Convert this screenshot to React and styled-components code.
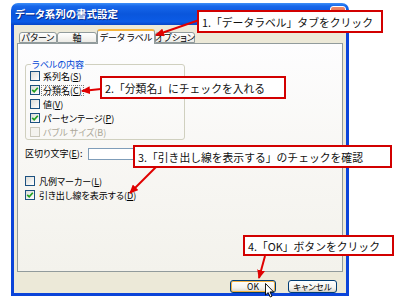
import React from "react"
import styled, { createGlobalStyle } from "styled-components"

const GlobalStyle = createGlobalStyle`
  html, body {
    margin: 0;
    padding: 0;
    background: #fff;
  }
  body {
    font-family: "Noto Sans CJK JP", "Liberation Sans", sans-serif;
    font-feature-settings: "palt";
  }
`

const Stage = styled.div`
  position: relative;
  width: 400px;
  height: 300px;
  overflow: hidden;
  background: #fff;
`

const Window = styled.div`
  margin: 3px 0 0 11px;
  width: 338px;
  height: 293px;
  display: flex;
  flex-direction: column;
`

const TitleBar = styled.div`
  height: 22px;
  flex: none;
  border-radius: 7px 7px 0 0;
  background: linear-gradient(180deg, #3d8ff8 0%, #1767ea 14%, #0a56dc 50%, #0b5be6 85%, #0846c6 100%);
  display: flex;
  align-items: center;
  justify-content: space-between;
  padding: 0 3px 0 4px;
`

const Title = styled.span`
  color: #fff;
  font-size: 10.5px;
  font-weight: bold;
  line-height: 12px;
  text-shadow: 1px 1px #0a2a8a;
`

const CloseBox = styled.span`
  width: 14px;
  height: 14px;
  border: 1px solid #fff;
  border-radius: 3px;
  background: linear-gradient(180deg, #f08a6a, #d8441e);
`

const Client = styled.div`
  flex: 1;
  display: flex;
  flex-direction: column;
  background: #ece9d8;
  border: 3px solid #0b44d9;
  border-top: none;
`

const TabStrip = styled.div`
  height: 14px;
  padding: 4px 0 0 5px;
  display: flex;
  align-items: flex-end;
  flex: none;
`

const Tab = styled.div`
  position: relative;
  z-index: 1;
  width: ${p => p.$w}px;
  height: ${p => (p.$active ? 15 : 11)}px;
  margin-bottom: ${p => (p.$active ? -1 : 0)}px;
  box-sizing: border-box;
  border: 1px solid #919b9c;
  border-bottom: ${p => (p.$active ? "none" : "1px solid #919b9c")};
  border-top: ${p => (p.$active ? "2px solid #f5b43c" : "1px solid #919b9c")};
  border-radius: 3px 3px 0 0;
  background: ${p => (p.$active ? "#fcfcfe" : "linear-gradient(180deg, #fff, #ecebe6)")};
  font-size: 9px;
  line-height: 9px;
  color: #000;
  display: flex;
  align-items: center;
  justify-content: center;
  white-space: nowrap;
`

const Panel = styled.div`
  flex: none;
  height: 229px;
  margin: 0 3px;
  box-sizing: border-box;
  border: 1px solid #919b9c;
  background: linear-gradient(180deg, #fdfdfe 0%, #f8f7f4 50%, #f3f2ec 100%);
  padding: 16px 0 0 7px;
  display: flex;
  flex-direction: column;
  align-items: flex-start;
`

const GroupBox = styled.fieldset`
  margin: 0;
  width: 160px;
  box-sizing: border-box;
  padding: 0 0 0 4px;
  border: 1px solid #d0d0bf;
  border-radius: 3px;
`

const Legend = styled.legend`
  font-size: 9px;
  line-height: 9px;
  color: #0046d5;
  padding: 0 1px;
  margin-left: 1px;
`

const CheckList = styled.div`
  display: flex;
  flex-direction: column;
`

const Row = styled.div`
  height: 14px;
  display: flex;
  align-items: center;
  margin-top: ${p => p.$mt || 0}px;
  font-size: 9px;
  color: ${p => (p.$disabled ? "#aca899" : "#000")};
  white-space: nowrap;
`

const Box = styled.span`
  width: 10px;
  height: 10px;
  box-sizing: border-box;
  border: 1px solid ${p => (p.$disabled ? "#cac8bb" : "#1c5180")};
  background: ${p => (p.$disabled ? "#f4f3ee" : "linear-gradient(135deg, #dcdcd7, #fff)")};
  margin-right: ${p => p.$gap || 1}px;
  display: flex;
  align-items: center;
  justify-content: center;
  flex: none;
`

const Label = styled.span`
  line-height: 9px;
  padding: 0 1px;
  border: 1px ${p => (p.$focus ? "dotted #777" : "solid transparent")};
`

const FieldRow = styled.div`
  height: 12px;
  margin-top: 8px;
  display: flex;
  align-items: center;
  font-size: 9px;
  white-space: nowrap;
`

const FieldLabel = styled.span`
  width: 63px;
  line-height: 10px;
`

const TextInput = styled.span`
  width: 70px;
  height: 12px;
  box-sizing: border-box;
  border: 1px solid #7f9db9;
  background: #fff;
`

const ButtonRow = styled.div`
  flex: none;
  height: 14px;
  margin-top: 7px;
  padding-right: 9px;
  display: flex;
  justify-content: flex-end;
  align-items: center;
  gap: 12px;
`

const Button = styled.div`
  width: ${p => p.$w}px;
  height: 13px;
  box-sizing: border-box;
  border: 1px solid #003c74;
  border-radius: 3px;
  background: linear-gradient(180deg, #fff 0%, #f4f3ee 60%, #d8d4c8 100%);
  box-shadow: ${p => (p.$hot ? "inset 0 0 0 1px #f3b143" : "inset 0 -1px 0 #d6d0c5")};
  font-size: 8.5px;
  line-height: 11px;
  text-align: center;
  color: #000;
`

const Callout = styled.div`
  position: absolute;
  left: ${p => p.$x}px;
  top: ${p => p.$y}px;
  width: ${p => p.$w}px;
  height: ${p => p.$h}px;
  box-sizing: border-box;
  border: 2px solid #d20000;
  background: #fff;
  padding-left: 3px;
  display: flex;
  align-items: center;
  font-size: 10.8px;
  font-feature-settings: normal;
  color: #111;
  white-space: nowrap;
  z-index: 3;
`

const Overlay = styled.svg`
  position: absolute;
  left: 0;
  top: 0;
  z-index: 2;
  pointer-events: none;
`

const Cursor = styled.svg`
  position: absolute;
  left: 265px;
  top: 283px;
  z-index: 4;
`

const Check = () => (
  <svg width="8" height="8" viewBox="0 0 8 8">
    <path d="M1.2 3.8 L3.2 5.8 L6.8 1.8" fill="none" stroke="#21a121" strokeWidth="1.7" />
  </svg>
)

const CheckRow = ({ checked, disabled, focus, gap, mt, children }) => (
  <Row $disabled={disabled} $mt={mt}>
    <Box $disabled={disabled} $gap={gap}>{checked && <Check />}</Box>
    <Label $focus={focus}>{children}</Label>
  </Row>
)

const arrows = [
  [205, 18, 156, 35],
  [101, 89, 82, 91],
  [156, 167, 130, 193],
  [265, 256, 259, 278],
]

export default function App() {
  return (
    <Stage>
      <GlobalStyle />
      <Window>
        <TitleBar>
          <Title>データ系列の書式設定</Title>
          <CloseBox />
        </TitleBar>
        <Client>
          <TabStrip>
            <Tab $w={38}>パターン</Tab>
            <Tab $w={40}>軸</Tab>
            <Tab $w={58} $active>データ ラベル</Tab>
            <Tab $w={40}>オプション</Tab>
          </TabStrip>
          <Panel>
            <GroupBox>
              <Legend>ラベルの内容</Legend>
              <CheckList>
                <CheckRow>系列名(<u>S</u>)</CheckRow>
                <CheckRow checked focus>分類名(<u>C</u>)</CheckRow>
                <CheckRow>値(<u>V</u>)</CheckRow>
                <CheckRow checked>パーセンテージ(<u>P</u>)</CheckRow>
                <CheckRow disabled>バブル サイズ(B)</CheckRow>
              </CheckList>
            </GroupBox>
            <FieldRow>
              <FieldLabel>区切り文字(<u>E</u>):</FieldLabel>
              <TextInput />
            </FieldRow>
            <CheckRow gap={2} mt={14}>凡例マーカー(<u>L</u>)</CheckRow>
            <CheckRow gap={2} checked>引き出し線を表示する(<u>D</u>)</CheckRow>
          </Panel>
          <ButtonRow>
            <Button $w={46} $hot>OK</Button>
            <Button $w={49}>キャンセル</Button>
          </ButtonRow>
        </Client>
      </Window>

      <Overlay width="400" height="300" viewBox="0 0 400 300">
        <defs>
          <marker id="head" markerUnits="userSpaceOnUse" markerWidth="9" markerHeight="8" refX="8" refY="4" orient="auto">
            <path d="M0 0 L9 4 L0 8 Z" fill="#e00000" />
          </marker>
        </defs>
        {arrows.map(([x1, y1, x2, y2], i) => (
          <line key={i} x1={x1} y1={y1} x2={x2} y2={y2} stroke="#e00000" strokeWidth="2" markerEnd="url(#head)" />
        ))}
      </Overlay>

      <Callout $x={197} $y={10} $w={186} $h={23}>1.「データラベル」タブをクリック</Callout>
      <Callout $x={100} $y={76} $w={186} $h={23}>2.「分類名」にチェックを入れる</Callout>
      <Callout $x={133} $y={145} $w={259} $h={23}>3.「引き出し線を表示する」のチェックを確認</Callout>
      <Callout $x={243} $y={235} $w={151} $h={21}>4.「OK」ボタンをクリック</Callout>

      <Cursor width="10" height="15" viewBox="0 0 10 15">
        <path d="M0.5 0.5 L0.5 12 L3.2 9.6 L5.2 14 L7 13.2 L5 8.9 L8.6 8.9 Z" fill="#fff" stroke="#000" strokeWidth="0.9" />
      </Cursor>
    </Stage>
  )
}
